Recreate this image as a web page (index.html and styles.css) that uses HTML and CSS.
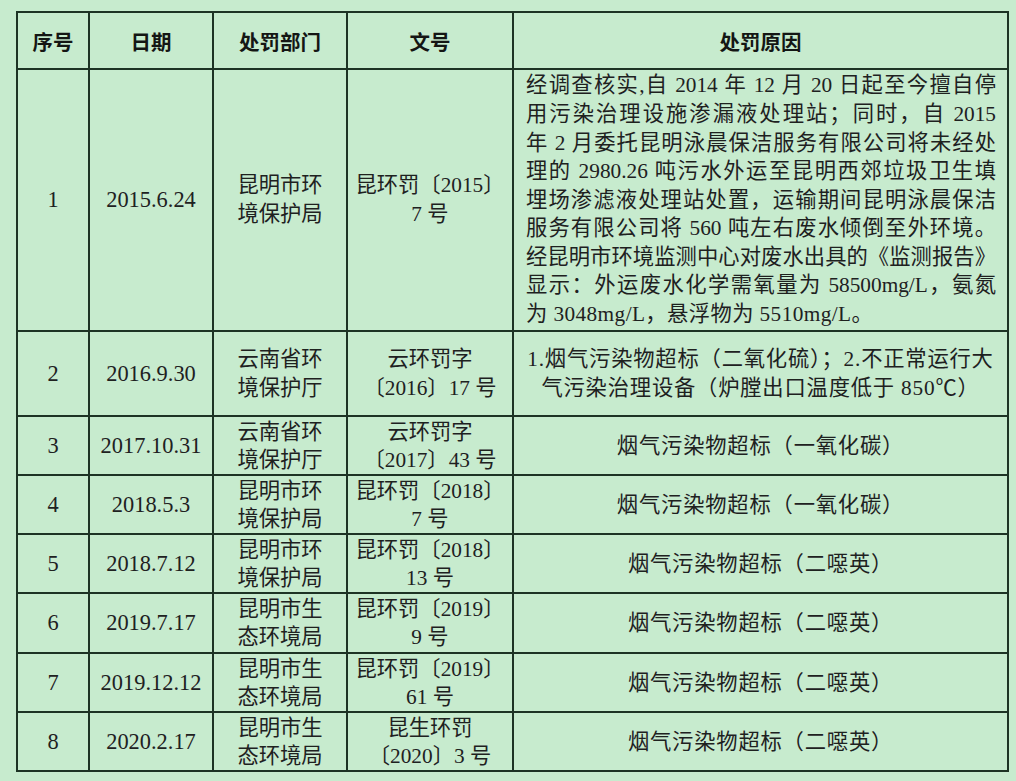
FILE: index.html
```html
<!DOCTYPE html>
<html lang="zh-CN">
<head>
<meta charset="utf-8">
<title>处罚记录</title>
<link rel="stylesheet" href="styles.css">
</head>
<body>
<div class="page">
<table class="penalty">
<colgroup>
<col class="c-no"><col class="c-date"><col class="c-dept"><col class="c-doc"><col class="c-reason">
</colgroup>
<thead>
<tr class="r-head"><th>序号</th><th>日期</th><th>处罚部门</th><th>文号</th><th>处罚原因</th></tr>
</thead>
<tbody>
<tr class="r-1">
<td class="num">1</td><td class="num">2015.6.24</td><td>昆明市环<br>境保护局</td><td>昆环罚〔2015〕<br>7 号</td>
<td class="reason">
<span class="jl">经调查核实,自 2014 年 12 月 20 日起至今擅自停</span>
<span class="jl">用污染治理设施渗漏液处理站；同时，自 2015</span>
<span class="jl">年 2 月委托昆明泳晨保洁服务有限公司将未经处</span>
<span class="jl">理的 2980.26 吨污水外运至昆明西郊垃圾卫生填</span>
<span class="jl">埋场渗滤液处理站处置，运输期间昆明泳晨保洁</span>
<span class="jl">服务有限公司将 560 吨左右废水倾倒至外环境。</span>
<span class="jl">经昆明市环境监测中心对废水出具的《监测报告》</span>
<span class="jl">显示：外运废水化学需氧量为 58500mg/L，氨氮</span>
<span class="ll">为 3048mg/L，悬浮物为 5510mg/L。</span>
</td>
</tr>
<tr class="r-2">
<td class="num">2</td><td class="num">2016.9.30</td><td>云南省环<br>境保护厅</td><td>云环罚字<br>〔2016〕17 号</td>
<td class="wide">1.烟气污染物超标（二氧化硫）；2.不正常运行大<br>气污染治理设备（炉膛出口温度低于 850℃）</td>
</tr>
<tr class="r-n">
<td class="num">3</td><td class="num">2017.10.31</td><td>云南省环<br>境保护厅</td><td>云环罚字<br>〔2017〕43 号</td>
<td class="wide">烟气污染物超标（一氧化碳）</td>
</tr>
<tr class="r-n">
<td class="num">4</td><td class="num">2018.5.3</td><td>昆明市环<br>境保护局</td><td>昆环罚〔2018〕<br>7 号</td>
<td class="wide">烟气污染物超标（一氧化碳）</td>
</tr>
<tr class="r-n">
<td class="num">5</td><td class="num">2018.7.12</td><td>昆明市环<br>境保护局</td><td>昆环罚〔2018〕<br>13 号</td>
<td class="wide">烟气污染物超标（二噁英）</td>
</tr>
<tr class="r-w">
<td class="num">6</td><td class="num">2019.7.17</td><td>昆明市生<br>态环境局</td><td>昆环罚〔2019〕<br>9 号</td>
<td class="wide">烟气污染物超标（二噁英）</td>
</tr>
<tr class="r-n">
<td class="num">7</td><td class="num">2019.12.12</td><td>昆明市生<br>态环境局</td><td>昆环罚〔2019〕<br>61 号</td>
<td class="wide">烟气污染物超标（二噁英）</td>
</tr>
<tr class="r-n">
<td class="num">8</td><td class="num">2020.2.17</td><td>昆明市生<br>态环境局</td><td>昆生环罚<br>〔2020〕3 号</td>
<td class="wide">烟气污染物超标（二噁英）</td>
</tr>
</tbody>
</table>
</div>
</body>
</html>
```

FILE: styles.css
```css
html, body {
  margin: 0;
  padding: 0;
  background: #c7ebce;
}
.page {
  padding: 11px 0 0 16px;
  width: 1000px;
  height: 770px;
}
.penalty {
  border-collapse: collapse;
  table-layout: fixed;
  width: 991px;
  font-family: "Liberation Serif", "Noto Sans CJK SC", serif;
  font-size: 21.3px;
  line-height: 28px;
  color: #1e211f;
}
.c-no { width: 72px; }
.c-date { width: 124px; }
.c-dept { width: 134px; }
.c-doc { width: 166px; }
.c-reason { width: 495px; }
.penalty th, .penalty td {
  border: 2px solid #1d3324;
  padding: 0;
  text-align: center;
  vertical-align: middle;
}
.penalty th {
  font-family: "Noto Sans CJK SC", sans-serif;
  font-weight: bold;
  font-size: 20.5px;
  color: #141614;
}
.penalty td.num {
  font-size: 22.4px;
}
.penalty td.wide {
  letter-spacing: 0.8px;
}
.r-head { height: 57px; }
.r-1 { height: 262px; }
.r-1 td { line-height: 28.6px; }
.r-2 { height: 85px; }
.r-2 td { line-height: 29px; }
.r-n { height: 59px; }
.r-w { height: 60px; }
.penalty td.reason {
  text-align: left;
  padding: 0 11px 0 12px;
}
.jl {
  display: block;
  text-align: justify;
  text-align-last: justify;
}
.ll {
  display: block;
  text-align: left;
  letter-spacing: 0.4px;
}
```
